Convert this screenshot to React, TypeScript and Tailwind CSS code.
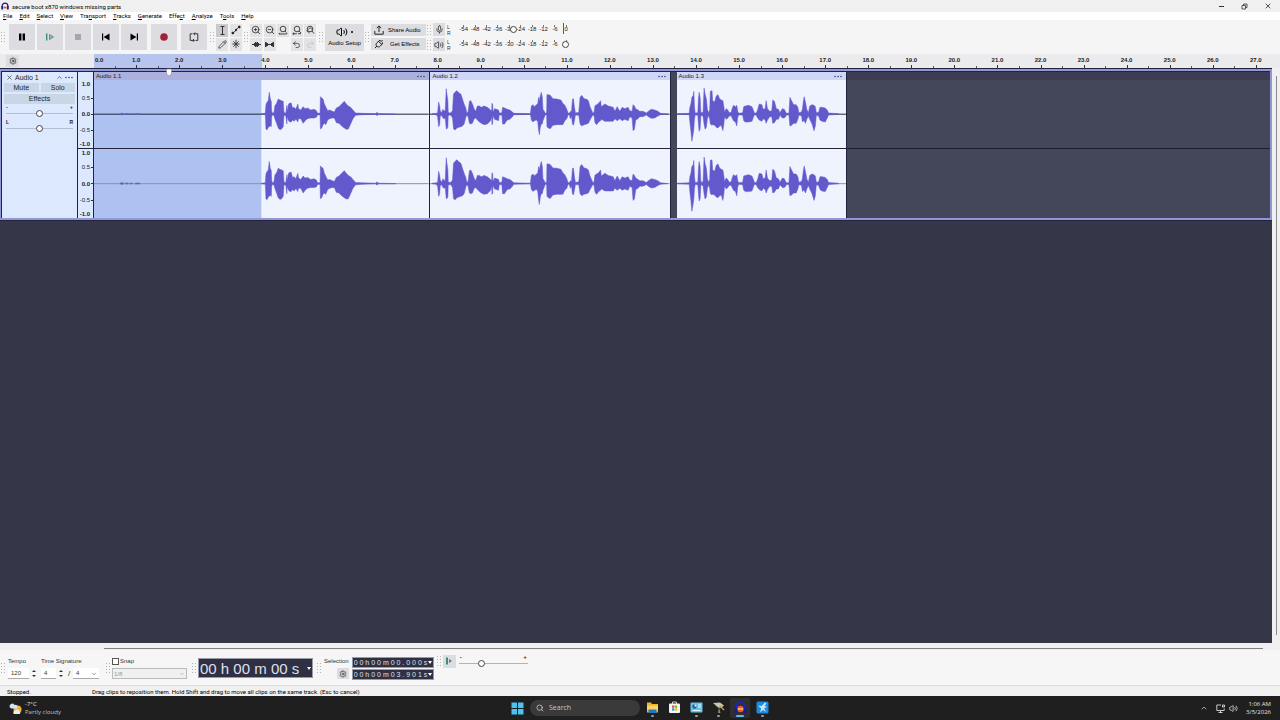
import React from "react"
import {
  ChevronDown,
  ChevronUp,
  Mic,
  Pencil,
  Redo2,
  Search,
  Settings,
  Undo2,
  Volume2,
  X,
  ZoomIn,
  ZoomOut,
} from "lucide-react"

// seconds that fit in the track view
const VIEW = 27.33
const pct = (seconds: number) => `${(seconds / VIEW) * 100}%`

const MENU = ["File", "Edit", "Select", "View", "Transport", "Tracks", "Generate", "Effect", "Analyze", "Tools", "Help"]
const UNDERLINE = [0, 0, 0, 0, 3, 0, 0, 4, 0, 1, 0]
const DB = ["-54", "-48", "-42", "-36", "-30", "-24", "-18", "-12", "-6", "0"]

type Clip = {
  name: string
  start: number
  end: number
  units: number
  offset: number
  selected?: number
  // x, height above the axis, depth below the axis
  wave: string
}

const CLIPS: Clip[] = [
  {
    name: "Audio 1.1",
    start: 0,
    end: 7.8,
    units: 1008,
    offset: 468,
    selected: 504,
    wave:
      "36,1,1 48,2,2 50,28,45 53,35,48 57,40,40 60,65,38 63,45,35 66,38,38 67,10,10 69,3,3 74,4,4 77,25,15 82,32,28 87,45,42 92,42,47 97,40,45 102,38,38 104,8,8 106,3,3 110,3,6 113,26,30 114,10,10 118,30,20 122,33,24 126,33,24 130,18,18 135,20,22 140,14,15 146,30,24 148,16,14 155,12,14 162,22,28 168,16,20 175,18,14 185,12,12 195,14,12 202,10,10 205,3,3 209,2,2 213,3,4 214,52,45 218,48,42 222,45,32 226,30,28 230,22,32 236,10,18 242,12,14 250,8,12 256,6,12 262,18,26 270,22,28 278,30,36 286,38,42 292,30,46 298,24,45 305,20,30 312,12,14 320,3,4 340,2,2 380,1,1 385,5,5 388,1,1 440,0,1",
  },
  {
    name: "Audio 1.2",
    start: 7.82,
    end: 13.41,
    units: 723,
    offset: -17,
    wave:
      "24,1,1 36,2,2 40,3,8 43,36,38 46,25,32 48,10,6 52,4,4 56,14,12 60,8,14 63,12,12 66,76,44 68,60,45 71,40,40 72,6,6 75,3,3 80,4,4 85,10,12 88,60,45 93,66,48 98,70,42 104,64,40 110,60,38 115,45,36 120,30,30 125,18,10 128,4,4 132,6,8 136,38,28 140,40,30 145,30,28 150,16,15 155,8,12 160,24,18 166,24,24 172,20,28 180,24,32 190,20,30 200,12,20 203,8,8 204,32,32 206,30,30 207,6,5 212,16,16 218,14,18 224,12,20 226,3,3 234,4,4 236,20,30 242,18,30 250,14,18 258,12,16 266,6,8 270,2,2 320,1,1 323,24,18 328,28,24 332,22,20 338,28,18 342,30,22 345,50,50 347,40,62 350,55,40 353,65,30 356,50,30 358,14,20 362,8,10 365,2,2 369,3,3 370,58,38 374,58,42 380,56,44 388,46,34 400,45,32 412,42,32 418,32,32 424,26,20 430,14,14 434,2,2 437,2,2 441,8,14 444,6,6 447,44,30 450,46,34 453,20,20 456,3,3 466,5,4 470,50,30 475,56,36 482,46,32 490,44,30 495,40,28 500,22,18 508,4,4 512,4,4 515,25,26 520,28,32 526,32,24 532,40,20 534,22,16 545,30,22 555,24,22 570,20,22 575,8,14 582,22,20 590,8,14 597,20,20 605,16,16 615,20,20 620,10,8 627,8,12 630,28,50 634,24,46 638,16,18 645,12,14 650,8,8 660,8,8 670,3,3 676,8,8 685,14,13 695,12,12 705,8,6 713,2,2 735,0,0",
  },
  {
    name: "Audio 1.3",
    start: 13.54,
    end: 17.5,
    units: 513,
    offset: -51,
    wave:
      "52,1,1 88,2,2 90,20,25 93,30,50 96,50,82 100,55,60 102,68,45 104,20,15 106,3,3 114,4,4 116,45,30 118,65,52 121,50,45 123,8,8 126,3,3 130,6,8 133,78,30 136,60,46 140,45,40 143,14,14 147,4,4 150,12,15 152,68,30 157,70,34 159,40,32 165,36,34 170,54,40 175,58,42 180,46,36 185,42,34 190,40,50 193,22,30 195,6,8 200,16,16 205,12,12 209,4,6 215,5,5 218,16,12 222,26,20 228,22,24 232,26,36 235,8,10 238,2,2 245,3,3 250,4,4 253,22,20 258,24,24 268,26,24 278,22,22 283,10,8 286,2,2 291,3,4 295,12,12 300,30,18 308,28,22 312,14,14 318,16,18 321,40,28 325,16,18 332,8,8 338,10,8 341,42,28 346,38,26 352,16,16 358,14,16 363,4,4 370,16,12 376,14,12 380,6,8 383,2,2 390,2,4 393,50,36 398,40,34 404,28,28 412,28,28 417,20,16 420,4,4 428,6,5 431,16,24 434,40,20 436,52,20 440,36,28 444,14,16 449,4,6 453,24,16 460,28,30 466,26,50 470,22,36 473,4,4 480,5,6 484,20,18 490,20,22 500,18,24 506,12,12 510,3,3 540,1,1",
  },
]

const thumb =
  "[&::-webkit-slider-thumb]:size-[7px] [&::-webkit-slider-thumb]:appearance-none [&::-webkit-slider-thumb]:rounded-full [&::-webkit-slider-thumb]:border [&::-webkit-slider-thumb]:border-[#444] [&::-webkit-slider-thumb]:bg-white"

const Handle = () => (
  <svg className="mx-px h-[10px] w-[5px] shrink-0" viewBox="0 0 5 10" fill="#b4b4b8">
    {[0, 3, 6, 9].map((y) => (
      <g key={y}>
        <rect x="0" y={y} width="1" height="1" />
        <rect x="3" y={y} width="1" height="1" />
      </g>
    ))}
  </svg>
)

const Dots = () => (
  <svg className="h-[3px] w-[8px]" viewBox="0 0 8 3" fill="#3f4270">
    <circle cx="1" cy="1.5" r="0.8" />
    <circle cx="4" cy="1.5" r="0.8" />
    <circle cx="7" cy="1.5" r="0.8" />
  </svg>
)

const TransportButton = ({ label, children }: { label: string; children: React.ReactNode }) => (
  <button aria-label={label} className="grid h-[26px] w-[26px] place-items-center bg-[#dddde1]">
    <svg className="h-[14px] w-[14px]" viewBox="0 0 14 14">
      {children}
    </svg>
  </button>
)

const ToolButton = ({
  label,
  active,
  children,
}: {
  label: string
  active?: boolean
  children: React.ReactNode
}) => (
  <button
    aria-label={label}
    className={`grid h-[13px] w-[12px] place-items-center text-[#333] ${active ? "bg-[#c9cad0]" : "bg-[#e3e3e6]"}`}
  >
    {children}
  </button>
)

const ZoomGlyph = ({ children }: { children: React.ReactNode }) => (
  <svg className="h-[10px] w-[10px]" viewBox="0 0 10 10" fill="none" stroke="#333" strokeWidth="0.9">
    <circle cx="5" cy="4" r="2.8" />
    {children}
  </svg>
)

const Meter = ({ label, value, peak }: { label: string; value: number; peak?: boolean }) => (
  <div className="flex h-[14px] items-center">
    <Handle />
    <button aria-label={label} className="grid h-[13px] w-[12px] place-items-center bg-[#dddde1] text-[#333]">
      {peak ? <Mic size={9} /> : <Volume2 size={10} />}
    </button>
    <div className="ml-[2px] flex w-[4px] flex-col text-[5px] leading-[6px] text-[#333]">
      <span>L</span>
      <span>R</span>
    </div>
    <div className="relative mb-[2px] ml-[7px] grid w-[114px] grid-cols-10 text-[6px] leading-[5px] text-[#222]">
      {DB.map((db) => (
        <span key={db} className="flex flex-col items-center">
          <i className="h-[2px] w-px bg-[#777]" />
          {db === "0" && !peak ? "" : db}
        </span>
      ))}
      {peak && <i className="absolute top-[-2px] right-[8px] h-[11px] w-px bg-[#4b4fc0]" />}
      <input
        type="range"
        aria-label={`${label} level`}
        defaultValue={value}
        className={`absolute inset-x-0 top-0 h-[9px] w-full appearance-none bg-transparent ${thumb} [&::-webkit-slider-thumb]:bg-transparent`}
      />
    </div>
  </div>
)

const Toolbar = () => (
  <div className="flex h-[34px] items-center bg-[#f5f5f6]">
    <Handle />
    <div className="ml-[2px] flex gap-[2px]">
      <TransportButton label="Pause">
        <path d="M4 3.5h2.400v7H4zM7.600 3.5H10v7H7.600z" />
      </TransportButton>
      <TransportButton label="Play">
        <path d="M3 3.5h1.4v7H3z" fill="#3d8f7a" />
        <path d="M6.5 4.5l4 2.5-4 2.5z" fill="#8bbcae" stroke="#3d8f7a" strokeWidth="0.8" />
      </TransportButton>
      <TransportButton label="Stop">
        <path d="M4 4h6v6H4z" fill="#a6a6ab" />
      </TransportButton>
      <TransportButton label="Skip to start">
        <path d="M3 3.5h1.2v7H3zM10.5 3.5v7L4.6 7z" />
      </TransportButton>
      <TransportButton label="Skip to end">
        <path d="M9.8 3.5H11v7H9.8zM3.5 3.5v7L9.4 7z" />
      </TransportButton>
    </div>
    <div className="mr-[2px] ml-[4px] flex gap-[4px]">
      <TransportButton label="Record">
        <circle cx="7" cy="7" r="3.8" fill="#a3203c" />
      </TransportButton>
      <TransportButton label="Loop">
        <g fill="none" stroke="#333" strokeWidth="1">
          <path d="M5.500 3.800H3.2v6.600H7M8.500 10.4h2.300V3.800H7" />
          <path d="M8 2.400L6.600 3.800 8 5.200M6 9l1.400 1.400L6 11.800" />
        </g>
      </TransportButton>
    </div>
    <Handle />
    <div className="grid w-[27px] grid-cols-2 gap-y-px">
      <ToolButton label="Selection tool" active>
        <svg className="h-[9px] w-[9px]" viewBox="0 0 9 9" fill="none" stroke="#333">
          <path d="M2.5.5h4M4.5.5v8M2.5 8.5h4" />
        </svg>
      </ToolButton>
      <ToolButton label="Envelope tool">
        <svg className="h-[10px] w-[10px]" viewBox="0 0 10 10" stroke="#222" fill="#222">
          <path d="M1.5 8.2C4 8 6 2 8.5 2" fill="none" />
          <circle cx="1.8" cy="8" r="0.9" />
          <circle cx="5" cy="5" r="0.7" />
          <circle cx="8.3" cy="2" r="0.9" />
        </svg>
      </ToolButton>
      <ToolButton label="Draw tool">
        <Pencil size={9} />
      </ToolButton>
      <ToolButton label="Multi-tool">
        <svg className="h-[10px] w-[10px]" viewBox="0 0 10 10" fill="none" stroke="#333">
          <path d="M5 .8v8.4M1.3 5h7.4M2.3 2.3l5.4 5.4M7.7 2.3L2.3 7.7" strokeWidth="0.9" />
        </svg>
      </ToolButton>
    </div>
    <Handle />
    <div className="grid w-[68px] grid-cols-5 gap-y-px">
      <ToolButton label="Zoom in">
        <ZoomIn size={10} />
      </ToolButton>
      <ToolButton label="Zoom out">
        <ZoomOut size={10} />
      </ToolButton>
      <ToolButton label="Fit selection to width">
        <ZoomGlyph>
          <path d="M7 6l1.4 1.6M1 9h7.5M1.8 7.8L.8 9M8.3 8l1 1" />
        </ZoomGlyph>
      </ToolButton>
      <ToolButton label="Fit project to width">
        <ZoomGlyph>
          <path d="M7 6l2 2M.8 8.7h4M2 7.6L.8 8.7 2 9.8M6 8.7h3" />
        </ZoomGlyph>
      </ToolButton>
      <ToolButton label="Zoom toggle">
        <ZoomGlyph>
          <path d="M7 6l2 2.5M3.5 4.5c1-2 2.5-2 3.5 0M1.500 5.500l3 2.500" />
        </ZoomGlyph>
      </ToolButton>
      <ToolButton label="Trim outside selection">
        <svg className="h-[9px] w-[9px]" viewBox="0 0 9 9" stroke="#333">
          <path d="M0 4.5h9M2.5 3v3M3.5 2v5M4.5 2.5v4M5.5 2v5M6.5 3v3" />
        </svg>
      </ToolButton>
      <ToolButton label="Silence selection">
        <svg className="h-[9px] w-[9px]" viewBox="0 0 9 9" stroke="#333">
          <path d="M0 4.5h9M.5 2v5M1.5 2.500v4M2.500 3v3M6.500 3v3M7.5 2.500v4M8.5 2v5" />
        </svg>
      </ToolButton>
      <span />
      <ToolButton label="Undo">
        <Undo2 size={9} />
      </ToolButton>
      <ToolButton label="Redo">
        <Redo2 size={9} className="text-[#c2c2c6]" />
      </ToolButton>
    </div>
    <Handle />
    <button className="flex h-[27px] w-[39px] flex-col items-center justify-center gap-px bg-[#dddde1] text-[6px] leading-[9px]">
      <span className="flex items-center gap-[3px]">
        <Volume2 size={12} />
        <i className="size-[2px] rounded-full bg-black" />
      </span>
      Audio Setup
    </button>
    <Handle />
    <div className="flex flex-col gap-[2px] text-[6px] leading-[8px]">
      <button className="flex h-[12px] w-[55px] items-center gap-[4px] bg-[#dddde1] pl-[3px]">
        <svg className="h-[10px] w-[10px]" viewBox="0 0 10 10" fill="none" stroke="#222">
          <path d="M.8 6v3.2h8.4V6M5 7V1M2.8 3L5 .9 7.2 3" />
        </svg>
        Share Audio
      </button>
      <button className="flex h-[12px] w-[55px] items-center gap-[6px] bg-[#dddde1] pl-[3px]">
        <svg className="h-[10px] w-[10px]" viewBox="0 0 10 10" fill="none" stroke="#222">
          <path d="M1 9l2-2M6 1.2L3 3.6C1.6 5 2 6.4 2.8 7.2S5 8.4 6.400 7L8.800 4M4.600 2.400l3 3M6 1.200l1 1.200M8.800 4L7.600 3M7 2.600L8.600 1" />
        </svg>
        Get Effects
      </button>
    </div>
    <div className="flex flex-col gap-px">
      <Meter label="Record meter" value={49} peak />
      <Meter label="Playback meter" value={97} />
    </div>
  </div>
)

const Ruler = () => (
  <div className="flex h-[14px] bg-[#ebebed] text-[6px] font-bold text-[#222]">
    <div className="flex w-[94px] shrink-0 items-center pl-[6px]">
      <button aria-label="Timeline options" className="grid h-[12px] w-[13px] place-items-center bg-[#dddde1]">
        <Settings size={8} />
      </button>
    </div>
    <div className="relative mr-[9px] flex-1">
      <div className="absolute inset-y-0 left-0 bg-[#b7c5ee]" style={{ width: pct(3.9) }} />
      <div className="relative flex h-full overflow-hidden">
        <span className="shrink-0 pl-px leading-[13px]" style={{ width: pct(0.48) }}>
          0.0
        </span>
        {Array.from({ length: 27 }).map((_, i) => (
          <span
            key={i}
            className="flex shrink-0 flex-col items-center justify-between leading-[13px]"
            style={{ width: pct(1) }}
          >
            <span className="h-[11px]">{i + 1}.0</span>
            <span className="flex h-[3px] w-full items-end">
              <i className="h-[2px] w-px bg-[#555]" />
              <i className="flex-1" />
              <i className="h-[3px] w-px bg-[#333]" />
              <i className="flex-1" />
            </span>
          </span>
        ))}
      </div>
      <svg className="absolute top-[14px] z-10 h-[9px] w-[7px] -translate-x-1/2" style={{ left: pct(1.75) }} viewBox="0 0 7 9">
        <path d="M1 1h5v5L3.500 8 1 6z" fill="#fff" stroke="#8a8a96" strokeWidth="0.600" />
      </svg>
    </div>
  </div>
)

const SCALE = ["1.0", "0.5", "0.0", "-0.5", "-1.0"]

const Scale = ({ className }: { className: string }) => (
  <div className={`grid grid-rows-[8px_20px_1fr_20px_8px] items-center text-[6px] leading-[6px] ${className}`}>
    {SCALE.map((v) => (
      <span key={v} className={`flex items-center justify-end gap-px ${v.includes("5") ? "" : "font-bold"}`}>
        {v}
        <i className={`h-px w-[2px] ${v.endsWith("1.0") ? "" : "bg-[#333]"}`} />
      </span>
    ))}
  </div>
)

const Wave = ({ clip, axis }: { clip: Clip; axis: string }) => {
  const points = clip.wave.split(" ").map((p) => p.split(",").map(Number))
  const above = points.map(([x, up]) => `${x + clip.offset},${102 - up}`)
  const below = points.map(([x, , down]) => `${x + clip.offset},${102 + down}`).reverse()
  return (
    <svg className="block h-full w-full" viewBox={`0 0 ${clip.units} 204`} preserveAspectRatio="none">
      {clip.selected && <rect width={clip.selected} height="204" fill="#adc2f0" />}
      <rect y="101" width={clip.units} height="3" fill={axis} />
      {clip.selected && (
        <path d="M78 102h12M84 98v8M94 102h10M108 102h8M124 102h14" stroke="#5f66b8" strokeWidth="4" />
      )}
      <polygon
        points={[...above, ...below].join(" ")}
        fill="#6259cc"
        stroke="#6259cc"
        strokeWidth="1.500"
      />
    </svg>
  )
}

const Slider = ({ label, low, high }: { label: string; low: string; high: string }) => (
  <div className="px-[2px]">
    <div className="flex justify-between text-[5px] leading-[5px] font-bold">
      <span>{low}</span>
      <span>{high}</span>
    </div>
    <input
      type="range"
      aria-label={label}
      className={`block h-[7px] w-full appearance-none bg-transparent [&::-webkit-slider-runnable-track]:h-px [&::-webkit-slider-runnable-track]:bg-[#b3bdd0] [&::-webkit-slider-thumb]:-mt-[3px] ${thumb}`}
    />
  </div>
)

const Track = () => (
  <section className="flex h-[153px] border-y border-[#23243c] bg-[#23243c]">
    <div className="flex flex-1 border-2 border-l border-[#8f97d6] bg-[#23243c] pt-px pl-px">
      <div className="flex w-[75px] shrink-0 flex-col bg-[#dce8fd] px-[2px] text-[7px] text-[#222]">
        <div className="flex h-[10px] items-center px-[2px] leading-[9px]">
          <button aria-label="Delete track">
            <X size={7} />
          </button>
          <span className="ml-[2px]">Audio 1</span>
          <button aria-label="Collapse" className="ml-auto">
            <ChevronUp size={7} />
          </button>
          <button aria-label="Track menu" className="ml-[2px]">
            <Dots />
          </button>
        </div>
        <div className="mt-px grid grid-cols-2 gap-[2px] leading-[9px]">
          <button className="h-[9px] bg-[#c9d6e6]">Mute</button>
          <button className="h-[9px] bg-[#c9d6e6]">Solo</button>
        </div>
        <button className="mt-[2px] h-[10px] bg-[#c9d6e6] leading-[10px]">Effects</button>
        <div className="mt-px flex flex-col gap-[3px]">
          <Slider label="Gain" low="-" high="+" />
          <Slider label="Pan" low="L" high="R" />
        </div>
      </div>
      <div className="ml-px flex w-[15px] shrink-0 flex-col bg-[#dce8fd] pt-[8px] text-[#222]">
        <Scale className="h-[68px]" />
        <div className="h-px bg-[#23243c]" />
        <Scale className="flex-1" />
      </div>
      <div className="ml-px flex min-w-0 flex-1 bg-[#44465a]">
        {CLIPS.map((clip, i) => (
          <div
            key={clip.name}
            className="flex shrink-0 flex-col border-r border-[#23243c] bg-[#eff3fe]"
            style={{
              width: pct(clip.end - clip.start),
              marginLeft: pct(i === 0 ? 0 : clip.start - CLIPS[i - 1].end),
            }}
          >
            <header
              className={`flex h-[8px] items-center justify-between px-[2px] pr-[4px] text-[6px] leading-[8px] text-[#222] ${clip.selected ? "bg-[#abb1dc]" : "rounded-t-[2px] bg-[#d0d6f7]"}`}
            >
              {clip.name}
              <Dots />
            </header>
            <div className="h-[68px]">
              <Wave clip={clip} axis="#25263a" />
            </div>
            <div className="h-px bg-[#23243c]" />
            <div className="min-h-0 flex-1">
              <Wave clip={clip} axis="#8d91a8" />
            </div>
          </div>
        ))}
        <div className="flex flex-1 flex-col">
          <div className="h-[8px] bg-[#3c3d52]" />
          <div className="h-[68px]" />
          <div className="h-px bg-[#1d1e2c]" />
        </div>
      </div>
    </div>
  </section>
)

const Spinner = ({ label, value, width }: { label: string; value: string; width: string }) => (
  <span className="flex items-center">
    <input aria-label={label} defaultValue={value} className={`h-[11px] border-b border-[#aaa] bg-white pl-[3px] text-[6px] ${width}`} />
    <span className="ml-[2px] flex w-[6px] flex-col items-center gap-[3px]">
      <button aria-label={`Increase ${label}`} className="border-x-2 border-b-2 border-x-transparent border-b-[#333]" />
      <button aria-label={`Decrease ${label}`} className="border-x-2 border-t-2 border-x-transparent border-t-[#333]" />
    </span>
  </span>
)

const TimeField = ({ label, value, big }: { label: string; value: string; big?: boolean }) => (
  <div
    className={`flex items-center border border-[#9a9aa6] bg-[#2f3044] text-[#dfe0ea] ${big ? "h-[20px] w-[115px]" : "h-[11px] w-[82px]"}`}
  >
    <input
      aria-label={label}
      defaultValue={value}
      className={`h-full min-w-0 flex-1 bg-transparent pl-px ${big ? "text-[15px]" : "text-[7px]"}`}
    />
    <button aria-label={`${label} format`} className="mr-px border-x-2 border-t-[3px] border-x-transparent border-t-white" />
  </div>
)

const BottomBar = () => (
  <div className="flex h-[35px] items-center bg-[#f6f6f7] pt-px text-[6px] leading-[8px] text-[#333]">
    <Handle />
    <div className="ml-px flex flex-col gap-[3px]">
      <span>Tempo</span>
      <Spinner label="Tempo" value="120" width="w-[21px]" />
    </div>
    <div className="ml-[4px] flex flex-col gap-[3px]">
      <span>Time Signature</span>
      <div className="flex items-center">
        <Spinner label="Beats" value="4" width="w-[15px]" />
        <span className="ml-[4px] w-[5px] text-[8px]">/</span>
        <span className="relative">
          <select aria-label="Beat unit" className="h-[11px] w-[26px] appearance-none border-b border-[#aaa] bg-white pl-[3px]">
            <option>4</option>
          </select>
          <ChevronDown size={6} className="pointer-events-none absolute top-[3px] right-[2px]" />
        </span>
      </div>
    </div>
    <div className="ml-[6px]">
      <Handle />
    </div>
    <div className="flex flex-col gap-[3px]">
      <label className="flex items-center gap-px">
        <input type="checkbox" className="size-[7px] appearance-none border border-[#555] bg-white" />
        Snap
      </label>
      <span className="relative">
        <select
          aria-label="Snap to"
          disabled
          className="block h-[11px] w-[75px] appearance-none border border-[#bbb] bg-[#f0f0f0] pl-px text-[#999]"
        >
          <option>1/8</option>
        </select>
        <ChevronDown size={6} className="pointer-events-none absolute top-[3px] right-[2px] text-[#999]" />
      </span>
    </div>
    <div className="ml-[4px]">
      <Handle />
    </div>
    <TimeField label="Audio position" value="00 h 00 m 00 s" big />
    <div className="ml-[3px]">
      <Handle />
    </div>
    <div className="mr-[3px] ml-px flex flex-col items-end gap-[3px]">
      <span>Selection</span>
      <button aria-label="Selection options" className="grid h-[11px] w-[12px] place-items-center bg-[#dddde1]">
        <Settings size={8} />
      </button>
    </div>
    <div className="mr-[2px] flex flex-col gap-px">
      <TimeField label="Selection start" value="0 0 h 0 0 m 0 0 . 0 0 0 s" />
      <TimeField label="Selection end" value="0 0 h 0 0 m 0 3 . 9 0 1 s" />
    </div>
    <div className="mb-[14px] flex items-center">
      <Handle />
      <button aria-label="Play at speed" className="grid h-[13px] w-[13px] place-items-center bg-[#dddde1]">
        <svg className="h-[8px] w-[8px]" viewBox="0 0 8 8" fill="#3d8f7a">
          <path d="M1 .5h2v7H1zM4 2l3 2-3 2z" />
        </svg>
      </button>
      <div className="ml-[3px] w-[69px] text-[6px] leading-[5px] font-bold">
        <div className="flex justify-between px-px">
          <span>-</span>
          <span>+</span>
        </div>
        <input
          type="range"
          aria-label="Playback speed"
          defaultValue={31}
          className={`block h-[7px] w-full appearance-none bg-transparent [&::-webkit-slider-runnable-track]:h-px [&::-webkit-slider-runnable-track]:bg-[#b4b4b8] [&::-webkit-slider-thumb]:-mt-[3px] ${thumb}`}
        />
      </div>
    </div>
  </div>
)

const TaskIcon = ({
  label,
  active,
  running,
  children,
}: {
  label: string
  active?: boolean
  running?: boolean
  children: React.ReactNode
}) => (
  <button
    aria-label={label}
    className={`flex h-[20px] w-[20px] flex-col items-center justify-end gap-px rounded-[2px] pb-px ${active ? "bg-[#2e2e33]" : ""}`}
  >
    <svg className="h-[13px] w-[13px]" viewBox="0 0 13 13">
      {children}
    </svg>
    <i className={`h-[2px] rounded-full ${active ? "w-[8px] bg-[#5cb8e8]" : running ? "w-[3px] bg-[#9a9a9a]" : "w-[3px]"}`} />
  </button>
)

const Taskbar = () => (
  <footer className="grid h-[24px] grid-cols-[1fr_auto_1fr] items-center bg-[#1f1f1f] px-[9px] font-['Open_Sans','Noto_Sans',sans-serif] text-[6px] leading-[8px] text-[#e4e4e4]">
    <button className="flex items-center gap-[3px] text-left">
      <svg className="h-[13px] w-[13px]" viewBox="0 0 13 13">
        <circle cx="8.500" cy="7.500" r="4" fill="#f3b52e" />
        <path d="M1 5.500a2.500 2.500 0 0 1 4.500-2.500A2 2 0 0 1 7.500 6.500H2z" fill="#cfe4f7" />
        <path d="M5 12a2 2 0 0 1 1-3.500 2.500 2.500 0 0 1 4.500 1 1.500 1.500 0 0 1 0 2.500z" fill="#e8eef7" />
      </svg>
      <span>
        -7°C
        <br />
        <span className="text-[#c0c0c0]">Partly cloudy</span>
      </span>
    </button>
    <div className="ml-[3px] flex items-center">
      <button aria-label="Start" className="mr-[6px]">
        <svg className="h-[13px] w-[13px]" viewBox="0 0 13 13" fill="#4cc2f1">
          <path d="M.5.5H6V6H.5zM7 .5h5.500V6H7zM.5 7H6v5.500H.5zM7 7h5.500v5.500H7z" />
        </svg>
      </button>
      <label className="mr-[2px] flex h-[16px] w-[110px] items-center gap-[5px] rounded-full bg-[#3a3a3b] pl-[6px]">
        <Search size={8} />
        <input placeholder="Search" aria-label="Search" className="w-[80px] bg-transparent text-[7px] placeholder:text-[#c8c8c8]" />
      </label>
      <div className="flex gap-[2px]">
        <TaskIcon label="File Explorer" running>
          <path d="M1 1.500h4l1 1.500h6v8.500H1z" fill="#f0b429" />
          <path d="M1 4.500h11v5H1z" fill="#fbd560" />
          <path d="M2.500 8.500h8v3.500h-8z" fill="#1e78c8" />
        </TaskIcon>
        <TaskIcon label="Store">
          <path d="M4.500 3V1h4v2" fill="none" stroke="#ccc" />
          <rect x="1" y="2.500" width="11" height="9.500" rx="1" fill="#f3f3f3" />
          <path d="M4 4.500h2.300v2.300H4z" fill="#e8502d" />
          <path d="M6.800 4.500h2.300v2.300H6.800z" fill="#7fba00" />
          <path d="M4 7.300h2.300v2.300H4z" fill="#1ea0e8" />
          <path d="M6.800 7.300h2.300v2.300H6.800z" fill="#ffb900" />
        </TaskIcon>
        <TaskIcon label="Control Panel" running>
          <rect x="0.500" y="1.500" width="12" height="10" rx="1" fill="#63c3ea" />
          <circle cx="4.500" cy="5.500" r="2.200" fill="#1f5f96" />
          <path d="M4.500 5.500V3.300a2.200 2.200 0 0 1 2.200 2.200z" fill="#e9f6fd" />
          <path d="M8 4h3M8 6h3M2.500 9.500h8" stroke="#e9f6fd" />
        </TaskIcon>
        <TaskIcon label="Satellite" running>
          <path d="M1 2l7-.5 4 3-3 2.500-3-.5z" fill="#c9c4b4" />
          <path d="M7 6l1.500 6H6z" fill="#8d8878" />
          <path d="M8 5l4 4" stroke="#b7a03c" strokeWidth="1.500" />
        </TaskIcon>
        <TaskIcon label="Audacity" active running>
          <path d="M1.800 9V6.500a4.700 4.700 0 0 1 9.400 0V9" fill="none" stroke="#1c22c8" strokeWidth="2" />
          <circle cx="6.500" cy="8" r="3.200" fill="#e8562a" />
          <path d="M4 8h5" stroke="#f8d84a" strokeWidth="1.400" />
          <path d="M.8 7.500h2.200v4.500H.8zM10 7.500h2.200v4.500H10z" fill="#1717a0" />
        </TaskIcon>
        <TaskIcon label="Snagit" running>
          <rect x="0.500" y="0.500" width="12" height="12" rx="1.500" fill="#1b8ae0" />
          <path d="M2 4.500l3.500.5L9 1.500l1.500 1L8.500 5l2.500 1-3 1.500 2.500 3.500-3.500-2-3 2.500 1.200-4z" fill="#c4e8fb" />
        </TaskIcon>
      </div>
    </div>
    <div className="flex items-center justify-end gap-[4px]">
      <ChevronUp size={8} className="mr-[4px]" />
      <svg className="h-[9px] w-[9px]" viewBox="0 0 9 9" fill="none" stroke="#ddd">
        <path d="M5 1H.8v5.500h7.400V4.500M2.500 8.500h4M4.500 6.500v2M6.500 1h2v2h-2z" strokeWidth="0.900" />
      </svg>
      <Volume2 size={9} />
      <span className="ml-[4px] text-right">
        1:06 AM
        <br />
        3/5/2026
      </span>
    </div>
  </footer>
)

export default function App() {
  return (
    <div className="flex min-h-screen flex-col bg-[#f5f5f6] font-['Liberation_Sans',Arial,sans-serif] text-black">
      <header className="flex h-[12px] items-center bg-[#f0f0f0] pl-px font-[Roboto,'Noto_Sans',sans-serif] text-[6px]">
        <svg className="h-[8px] w-[8px]" viewBox="0 0 13 13">
          <path d="M1.800 9V6.500a4.700 4.700 0 0 1 9.400 0V9" fill="none" stroke="#1c1c80" strokeWidth="2" />
          <path d="M4 9h5" stroke="#e8562a" strokeWidth="3" />
          <path d="M.5 7h2.800v5H.5zM9.700 7h2.800v5H9.700z" fill="#1c1c70" />
        </svg>
        <h1 className="ml-[3px] flex-1">secure boot x870 windows missing parts</h1>
        <div className="flex gap-[16px] pr-[8px]">
          <button aria-label="Minimize">
            <svg className="h-[7px] w-[7px]" viewBox="0 0 7 7">
              <path d="M1 3.500h5" stroke="#333" />
            </svg>
          </button>
          <button aria-label="Restore">
            <svg className="h-[7px] w-[7px]" viewBox="0 0 7 7" fill="none" stroke="#333" strokeWidth="0.800">
              <path d="M1 2.500h3.500V6H1zM2.500 2.500V1H6v3.500H4.500" />
            </svg>
          </button>
          <button aria-label="Close">
            <X size={8} />
          </button>
        </div>
      </header>
      <nav className="flex h-[8px] items-center gap-[7px] bg-white pl-[3px] font-[Roboto,'Noto_Sans',sans-serif] text-[6px] leading-[8px]">
        {MENU.map((item, i) => (
          <button key={item}>
            {item.slice(0, UNDERLINE[i])}
            <u>{item[UNDERLINE[i]]}</u>
            {item.slice(UNDERLINE[i] + 1)}
          </button>
        ))}
      </nav>
      <Toolbar />
      <Ruler />
      <div className="flex flex-1">
        <main className="min-w-0 flex-1 bg-[#353648]">
          <Track />
        </main>
        <div className="flex w-[8px] justify-center bg-[#f0f0f2] pt-[8px] pb-[8px]">
          <i className="w-px bg-[#8a8a8a]" />
        </div>
      </div>
      <div className="h-[7px] bg-[#f0f0f2] pt-[5px] pr-[17px] pl-[104px]">
        <div className="h-px bg-[#808084]" />
      </div>
      <BottomBar />
      <div className="flex h-[11px] items-center border-t border-[#ddd] bg-[#f0f0f0] pl-[7px] font-[Roboto,'Noto_Sans',sans-serif] text-[6px] leading-[9px]">
        <span className="w-[85px]">Stopped.</span>
        <span>Drag clips to reposition them. Hold Shift and drag to move all clips on the same track. (Esc to cancel)</span>
      </div>
      <Taskbar />
    </div>
  )
}
